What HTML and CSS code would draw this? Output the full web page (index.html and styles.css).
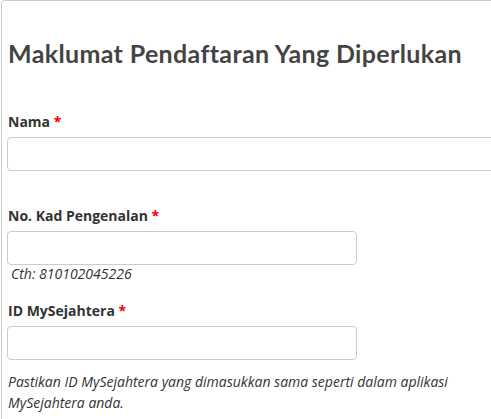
FILE: index.html
```html
<!DOCTYPE html>
<html lang="ms">
<head>
<meta charset="utf-8">
<title>Maklumat Pendaftaran</title>
<link rel="stylesheet" href="styles.css">
</head>
<body>
<div class="card">
  <h2 class="title">Maklumat Pendaftaran Yang Diperlukan</h2>
  <div class="group group-first">
    <label class="label" for="nama">Nama <span class="req">*</span></label>
    <input class="input input-full" id="nama" type="text">
  </div>
  <div class="group">
    <label class="label" for="ic">No. Kad Pengenalan <span class="req">*</span></label>
    <input class="input input-mid" id="ic" type="text">
    <div class="help">Cth: 810102045226</div>
  </div>
  <div class="group group-after-help">
    <label class="label" for="mysj">ID MySejahtera <span class="req">*</span></label>
    <input class="input input-mid" id="mysj" type="text">
  </div>
  <p class="note">Pastikan ID MySejahtera yang dimasukkan sama seperti dalam aplikasi MySejahtera anda.</p>
</div>
</body>
</html>
```

FILE: styles.css
```css
html, body {
  margin: 0;
  padding: 0;
  background: #fff;
  overflow: hidden;
}
body {
  font-family: "Open Sans", "Liberation Sans", sans-serif;
  color: #333;
}
.card {
  margin-left: 1px;
  width: 520px;
  min-height: 440px;
  box-sizing: border-box;
  border: 1px solid #cccccc;
  border-radius: 4px;
  padding: 37px 5px 0 5px;
}
.title {
  margin: 0;
  font-family: "Lato", "Open Sans", sans-serif;
  font-weight: 700;
  font-size: 25px;
  line-height: 30px;
  color: #444;
  letter-spacing: 0.35px;
  padding-left: 1px;
}
.group {
  margin-top: 35px;
}
.group-first {
  margin-top: 44px;
}
.group-after-help {
  margin-top: 18px;
}
.label {
  display: block;
  font-weight: 700;
  font-size: 14px;
  line-height: 20px;
  margin-bottom: 5px;
  padding-left: 1px;
  color: #333;
}
.req {
  color: #ee0000;
}
.input {
  display: block;
  box-sizing: border-box;
  height: 34px;
  border: 1px solid #cccccc;
  border-radius: 4px;
  background: #fff;
  padding: 6px 12px;
  font: inherit;
  margin: 0;
}
.input-full {
  width: 520px;
}
.input-mid {
  width: 350px;
}
.help {
  font-style: italic;
  font-size: 14px;
  line-height: 18px;
  padding-left: 4px;
  color: #333;
}
.note {
  margin: 11px 0 0 0;
  font-style: italic;
  font-size: 14px;
  line-height: 21px;
  padding-left: 1px;
  color: #333;
  width: 470px;
}
```
